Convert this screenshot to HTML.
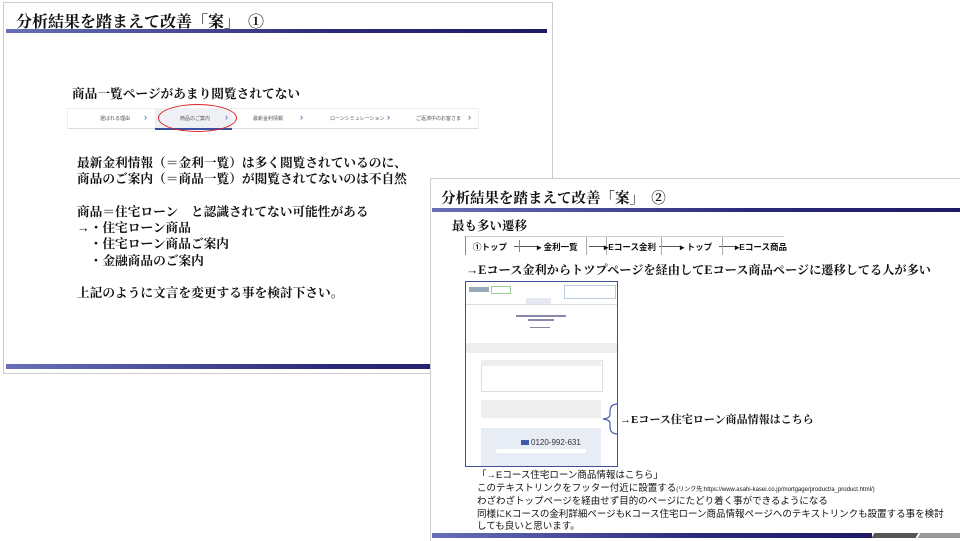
<!DOCTYPE html>
<html><head><meta charset="utf-8"><style>
body{margin:0;width:960px;height:540px;background:#fff;position:relative;overflow:hidden;font-family:"Liberation Serif","Noto Serif CJK SC",serif;color:#111}
.abs{position:absolute}
.slide{position:absolute;background:#fff;border:1px solid #ccc}
.bar{position:absolute;height:5px;background:linear-gradient(90deg,#6a6fb8,#2a2a7a 60%,#1e1a66)}
.g{font-family:"Liberation Sans","Noto Sans CJK JP",sans-serif}
.t{font-weight:bold;white-space:nowrap}
</style></head><body>
<!-- slide 1 -->
<div class="slide" style="left:3px;top:2px;width:548px;height:370px"></div>
<div class="abs t" style="left:16px;top:9px;font-size:16px">分析結果を踏まえて改善「案」　①</div>
<div class="bar" style="left:6px;top:29px;width:541px;height:4px"></div>
<div class="abs t" style="left:72px;top:83px;font-size:12.7px">商品一覧ページがあまり閲覧されてない</div>
<div class="abs g" style="left:67px;top:108px;width:410px;height:19px;border:1px solid #eee;border-bottom:1px solid #ddd;font-size:5px;color:#555">
 <div class="abs" style="left:87px;top:0;width:77px;height:19px;background:#eef0f6;border-bottom:2px solid #3b4fa0"></div>
 <span class="abs" style="left:32px;top:6px">選ばれる理由</span><span class="abs" style="left:76px;top:3px;color:#3b4fa0;font-size:9px">›</span>
 <span class="abs" style="left:112px;top:6px">商品のご案内</span><span class="abs" style="left:157px;top:3px;color:#3b4fa0;font-size:9px">›</span>
 <span class="abs" style="left:185px;top:6px">最新金利情報</span><span class="abs" style="left:232px;top:3px;color:#3b4fa0;font-size:9px">›</span>
 <span class="abs" style="left:262px;top:6px">ローンシミュレーション</span><span class="abs" style="left:319px;top:3px;color:#3b4fa0;font-size:9px">›</span>
 <span class="abs" style="left:348px;top:6px">ご返済中のお客さま</span><span class="abs" style="left:400px;top:3px;color:#3b4fa0;font-size:9px">›</span>
</div>
<div class="abs" style="left:158px;top:104px;width:77px;height:26px;border:1.5px solid #d22;border-radius:50%"></div>
<div class="abs t" style="left:77px;top:155px;font-size:12.7px;line-height:16.3px">最新金利情報（＝金利一覧）は多く閲覧されているのに、<br>商品のご案内（＝商品一覧）が閲覧されてないのは不自然<br><br>商品＝住宅ローン　と認識されてない可能性がある<br>→・住宅ローン商品<br>　・住宅ローン商品ご案内<br>　・金融商品のご案内<br><br>上記のように文言を変更する事を検討下さい。</div>
<div class="bar" style="left:6px;top:364px;width:541px"></div>
<!-- slide 2 -->
<div class="slide" style="left:430px;top:178px;width:530px;height:362px;border-right:none;border-bottom:none"></div>
<div class="abs t" style="left:441px;top:187px;font-size:14.5px">分析結果を踏まえて改善「案」　②</div>
<div class="bar" style="left:432px;top:208px;width:528px;height:4px"></div>
<div class="abs t" style="left:452px;top:216px;font-size:12.5px">最も多い遷移</div>
<div class="abs g t" style="left:464px;top:236px;width:320px;height:18px;border-top:1px solid #ccc;font-size:8.5px">
 <div class="abs" style="left:1px;top:0;width:1px;height:18px;background:#888"></div>
 <span class="abs" style="left:9px;top:4px">①トップ</span>
 <div class="abs" style="left:50px;top:9px;width:24px;height:1px;background:#555"></div><div class="abs" style="left:55px;top:3px;width:1px;height:12px;background:#888"></div>
 <span class="abs" style="left:73px;top:4px">▸ 金利一覧</span>
 <div class="abs" style="left:122px;top:0;width:1px;height:18px;background:#aaa"></div>
 <div class="abs" style="left:125px;top:9px;width:17px;height:1px;background:#555"></div><div class="abs" style="left:142px;top:0;width:1px;height:18px;background:#aaa"></div>
 <span class="abs" style="left:140px;top:4px">▸Eコース金利</span>
 <div class="abs" style="left:195px;top:9px;width:22px;height:1px;background:#555"></div><div class="abs" style="left:197px;top:0;width:1px;height:18px;background:#aaa"></div>
 <span class="abs" style="left:216px;top:4px">▸ トップ</span>
 <div class="abs" style="left:255px;top:9px;width:18px;height:1px;background:#555"></div><div class="abs" style="left:258px;top:0;width:1px;height:18px;background:#aaa"></div>
 <span class="abs" style="left:271px;top:4px">▸Eコース商品</span>
</div>
<div class="abs t" style="left:466px;top:261px;font-size:12.2px">→Eコース金利からトツプページを経由してEコース商品ページに遷移してる人が多い</div>
<!-- mock screenshot -->
<div class="abs g" style="left:465px;top:281px;width:151px;height:184px;border:1.5px solid #3d4f9a;background:#fff;overflow:hidden;font-size:3px;color:#889">
 <div class="abs" style="left:3px;top:5px;width:20px;height:5px;background:#9ab"></div>
 <div class="abs" style="left:25px;top:4px;width:18px;height:6px;border:1px solid #9c9"></div>
 <div class="abs" style="left:98px;top:3px;width:50px;height:12px;border:1px solid #bcd"></div>
 <div class="abs" style="left:0;top:16px;width:151px;height:6px;border-bottom:1px solid #ddd"></div>
 <div class="abs" style="left:60px;top:16px;width:25px;height:6px;background:#e6e8f0"></div>
 <div class="abs" style="left:50px;top:33px;width:50px;height:2px;background:#88a"></div>
 <div class="abs" style="left:62px;top:37px;width:26px;height:2px;background:#88a"></div>
 <div class="abs" style="left:64px;top:45px;width:20px;height:1px;background:#889"></div>
 <div class="abs" style="left:0;top:61px;width:151px;height:10px;background:#eee"></div>
 <div class="abs" style="left:15px;top:78px;width:120px;height:30px;border:1px solid #ddd"></div>
 <div class="abs" style="left:15px;top:78px;width:120px;height:6px;background:#eee"></div>
 <div class="abs" style="left:15px;top:118px;width:120px;height:18px;background:#eee"></div>
 <div class="abs" style="left:15px;top:146px;width:120px;height:40px;background:#e8ecf4"></div>
 <div class="abs" style="left:55px;top:158px;width:8px;height:5px;background:#3d5ca8"></div>
 <span class="abs" style="left:65px;top:156px;font-size:8px;color:#333">0120-992-631</span>
 <div class="abs" style="left:30px;top:167px;width:90px;height:4px;background:#fff;border-radius:2px"></div>
</div>
<svg class="abs" style="left:600px;top:403px" width="20" height="32"><path d="M18 1 Q10 1 10 8 L10 12 Q10 15 3 16 Q10 17 10 20 L10 24 Q10 31 18 31" fill="none" stroke="#4a5ea8" stroke-width="1.2"/></svg>
<div class="abs t" style="left:620px;top:411px;font-size:11px">→Eコース住宅ローン商品情報はこちら</div>
<div class="abs g" style="left:477px;top:470px;font-size:9.5px;line-height:12.5px;white-space:nowrap">「→Eコース住宅ローン商品情報はこちら」<br>このテキストリンクをフッター付近に設置する<span style="font-size:6px">(リンク先:https://www.asahi-kasei.co.jp/mortgage/product/a_product.html/)</span><br>わざわざトップページを経由せず目的のページにたどり着く事ができるようになる<br>同様にKコースの金利詳細ページもKコース住宅ローン商品情報ページへのテキストリンクも設置する事を検討<br>しても良いと思います。</div>
<div class="bar" style="left:432px;top:533px;width:440px"></div>
<div class="abs" style="left:873px;top:533px;width:44px;height:5px;background:#555;transform:skewX(-30deg)"></div>
<div class="abs" style="left:919px;top:533px;width:45px;height:5px;background:#999;transform:skewX(-30deg)"></div>
</body></html>
